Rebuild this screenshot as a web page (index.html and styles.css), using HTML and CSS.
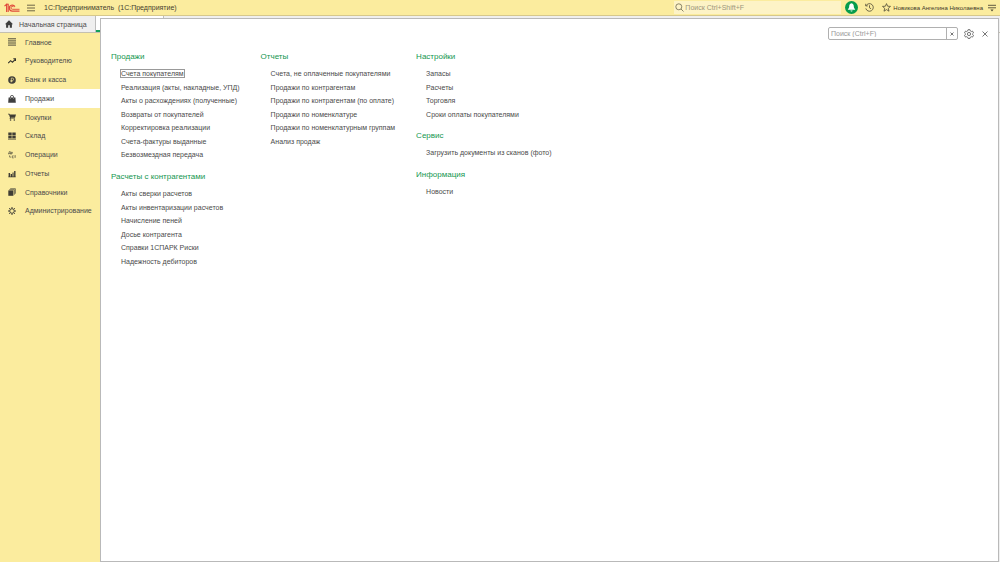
FILE: index.html
```html
<!DOCTYPE html>
<html lang="ru">
<head>
<meta charset="utf-8">
<title>1С:Предприниматель</title>
<link rel="stylesheet" href="styles.css">
</head>
<body>
<div class="app">
  <header class="topbar">
    <svg class="logo" viewBox="0 0 16 10" fill="none" stroke="#e0483a"><path d="M.5 3.2 2.6 1.3V9M4.2 9V.8M2.6 1.2h1.6" stroke-width="1.1"/><path d="M10.9 3.6A3 3 0 1 0 8.4 8.1H15.5" stroke-width="1.2"/><path d="M9.8 4.2A1.5 1.5 0 1 0 8.5 6.3H15.5" stroke-width=".9"/></svg>
    <button class="icon-btn menu-btn" aria-label="Меню"><svg width="8" height="8" viewBox="0 0 8 8" stroke="#5c563c" stroke-width=".9"><path d="M0 1.2h8M0 4h8M0 6.8h8"/></svg></button>
    <h1 class="title">1С:Предприниматель&nbsp; (1С:Предприятие)</h1>
    <label class="global-search">
      <svg width="9" height="9" viewBox="0 0 9 9" fill="none" stroke="#6f6a50" stroke-width=".8"><circle cx="3.8" cy="3.8" r="3"/><path d="m6 6 2.5 2.5"/></svg>
      <input type="text" placeholder="Поиск Ctrl+Shift+F" aria-label="Глобальный поиск">
    </label>
    <button class="icon-btn bell" aria-label="Уведомления"><svg width="13" height="13" viewBox="0 0 13 13"><circle cx="6.5" cy="6.5" r="6.5" fill="#069c4c"/><path d="M6.5 2.3c-1.9.3-2.2 1.7-2.3 3.2-.1 1.4-.6 2-1.3 2.8v.5h7.2v-.5c-.7-.8-1.2-1.4-1.3-2.8-.1-1.5-.4-2.9-2.3-3.2ZM5.4 9.4a1.1 1.1 0 0 0 2.2 0Z" fill="#fff"/></svg></button>
    <button class="icon-btn history" aria-label="История"><svg width="9" height="9" viewBox="0 0 9 9" fill="none" stroke="#4f4a36" stroke-width=".8"><path d="M1.1 2.7A3.8 3.8 0 1 1 .8 5.4M.7.8v2.1h2.1M4.5 2.3v2.5l1.6 1"/></svg></button>
    <button class="icon-btn star" aria-label="Избранное"><svg width="9" height="9" viewBox="0 0 9 9" fill="none" stroke="#4f4a36" stroke-width=".8" stroke-linejoin="round"><path d="m4.5.6 1.1 2.6 2.9.2-2.2 1.9.7 2.9-2.5-1.6L2 8.2l.7-2.9L.5 3.4l2.9-.2Z"/></svg></button>
    <button class="user">Новикова Ангелина Николаевна</button>
    <button class="icon-btn options" aria-label="Сервис и настройки"><svg width="8" height="8" viewBox="0 0 8 8"><path d="M0 1.3h8M0 3.8h8" stroke="#4f4a36" stroke-width=".9"/><path d="M2.4 5.6h3.2L4 7.6Z" fill="#4f4a36"/></svg></button>
  </header>

  <div class="tabs">
    <a class="tab" href="#home"><svg width="8" height="8" viewBox="0 0 8 8" fill="#3d3d3d"><path d="M4 .3 0 4.2h1.1v3.5h2.1V5.2h1.6v2.5h2.1V4.2H8Z"/></svg>Начальная страница</a>
    <a class="tab tab-active" href="#current" aria-label="Текущая вкладка"></a>
  </div>

  <div class="workspace">
    <nav class="sidebar">
      <ul>
        <li><a href="#main"><svg viewBox="0 0 8 8" stroke="#4d4a3b" stroke-width="1"><path d="M0 .8h8M0 2.9h8M0 5h8M0 7.1h8"/></svg>Главное</a></li>
        <li><a href="#manager"><svg viewBox="0 0 8 8" fill="none" stroke="#33322c" stroke-width="1.1"><path d="M.2 6.2 2.7 3.7l1.7 1.6L7.2 2.5"/><path d="M5.3 1.8h2.2V4" /></svg>Руководителю</a></li>
        <li><a href="#bank"><svg viewBox="0 0 8 8"><circle cx="4" cy="4" r="3.8" fill="#43413a"/><path d="M3.3 6.3V2.1h1.1a1.1 1.1 0 0 1 0 2.4H2.5M2.5 5.4h2" fill="none" stroke="#f9ea9e" stroke-width=".7"/></svg>Банк и касса</a></li>
        <li class="current"><a href="#sales" aria-current="page"><svg viewBox="0 0 8 8"><path d="M.6 2.6h6.8l.4 5.2H.2Z" fill="#3f3f3f"/><path d="M2.4 3.8V2a1.6 1.6 0 0 1 3.2 0v1.8" fill="none" stroke="#3f3f3f" stroke-width=".8"/><path d="M2.4 2.8v1.1M5.6 2.8v1.1" stroke="#ddd" stroke-width=".5"/></svg>Продажи</a></li>
        <li><a href="#purchases"><svg viewBox="0 0 8 8" fill="#3f3d34"><path d="M0 .8h1.5l.4.8H8L7 4.7H2.8L2.6 5.4H7v.7H1.9l-.3-.5.4-.9L1 1.5H0Z"/><circle cx="2.6" cy="7" r=".8"/><circle cx="6.3" cy="7" r=".8"/></svg>Покупки</a></li>
        <li><a href="#warehouse"><svg viewBox="0 0 8 8" fill="#3f3d34"><path d="M.3.6h3.4v2.8H.3ZM4.3.6h3.4v2.8H4.3ZM.3 3.9h3.4v2.4H.3ZM4.3 3.9h3.4v2.4H4.3ZM0 6.7h8v.8H0Z"/></svg>Склад</a></li>
        <li><a href="#operations"><svg viewBox="0 0 8 8" fill="none" stroke="#5a5744" stroke-width=".7"><path d="M.2 3.3V2.6h2.6v.7M.8 2.5 1.3.6h1v2M3.2 3.5V1.3h1.2v1H3.2M5.7 4.9H4.3v2h1.4M6.5 4.8h1.3M7.1 4.8V7M1.6 4.4v1.7h1.5"/></svg>Операции</a></li>
        <li><a href="#reports"><svg viewBox="0 0 8 8" fill="#3f3d34"><path d="M.6 3h1.5v3.6H.6ZM2.7 4h1.4v2.6H2.7ZM4.5 2.5h1.1v4.1H4.5ZM6.1 1.1h1.4v5.5H6.1ZM.3 6.5h7.4v.8H.3Z"/></svg>Отчеты</a></li>
        <li><a href="#catalogs"><svg viewBox="0 0 8 8"><path d="M.3 2.4h5.1v5.4H.3Z" fill="#3f3d34"/><path d="M1.2 1.7h5.2v5M2.2.7h5.2v5" fill="none" stroke="#4b493e" stroke-width=".7"/></svg>Справочники</a></li>
        <li><a href="#admin"><svg viewBox="0 0 8 8" fill="none" stroke="#3f3d34"><circle cx="4" cy="4" r="2.3" stroke-width="1"/><path d="M4 0v1.4M4 6.6V8M0 4h1.4M6.6 4H8M1.2 1.2l.9.9M5.9 5.9l.9.9M6.8 1.2l-.9.9M2.1 5.9l-.9.9" stroke-width="1"/></svg>Администрирование</a></li>
      </ul>
    </nav>
  </div>

  <main class="panel">
    <div class="panel-tools">
      <div class="panel-search">
        <input type="text" placeholder="Поиск (Ctrl+F)" aria-label="Поиск">
        <button aria-label="Очистить"><svg width="4" height="4" viewBox="0 0 4 4" stroke="#555" stroke-width=".8"><path d="m.5.5 3 3M3.5.5l-3 3"/></svg></button>
      </div>
      <button class="icon-btn" aria-label="Настройка"><svg width="10" height="10" viewBox="0 0 10 10" fill="none" stroke="#555" stroke-width=".8" stroke-linejoin="round"><path d="M4 .7h2l.3 1.2 1 .6 1.2-.4 1 1.8-.9.8v.8l.9.8-1 1.8-1.2-.4-1 .6L6 9.4H4l-.3-1.1-1-.6-1.2.4-1-1.8.9-.8v-.8l-.9-.8 1-1.8 1.2.4 1-.6Z"/><circle cx="5" cy="5" r="1.6"/></svg></button>
      <button class="icon-btn" aria-label="Закрыть"><svg width="6" height="6" viewBox="0 0 6 6" stroke="#555" stroke-width=".8"><path d="m.5.5 5 5M5.5.5l-5 5"/></svg></button>
    </div>
    <div class="columns">
      <div class="column">
        <section>
          <h2>Продажи</h2>
          <ul>
            <li><a class="focused" href="#l1">Счета покупателям</a></li>
            <li><a href="#l2">Реализация (акты, накладные, УПД)</a></li>
            <li><a href="#l3">Акты о расхождениях (полученные)</a></li>
            <li><a href="#l4">Возвраты от покупателей</a></li>
            <li><a href="#l5">Корректировка реализации</a></li>
            <li><a href="#l6">Счета-фактуры выданные</a></li>
            <li><a href="#l7">Безвозмездная передача</a></li>
          </ul>
        </section>
        <section>
          <h2>Расчеты с контрагентами</h2>
          <ul>
            <li><a href="#l8">Акты сверки расчетов</a></li>
            <li><a href="#l9">Акты инвентаризации расчетов</a></li>
            <li><a href="#l10">Начисление пеней</a></li>
            <li><a href="#l11">Досье контрагента</a></li>
            <li><a href="#l12">Справки 1СПАРК Риски</a></li>
            <li><a href="#l13">Надежность дебиторов</a></li>
          </ul>
        </section>
      </div>
      <div class="column">
        <section>
          <h2>Отчеты</h2>
          <ul>
            <li><a href="#r1">Счета, не оплаченные покупателями</a></li>
            <li><a href="#r2">Продажи по контрагентам</a></li>
            <li><a href="#r3">Продажи по контрагентам (по оплате)</a></li>
            <li><a href="#r4">Продажи по номенклатуре</a></li>
            <li><a href="#r5">Продажи по номенклатурным группам</a></li>
            <li><a href="#r6">Анализ продаж</a></li>
          </ul>
        </section>
      </div>
      <div class="column">
        <section>
          <h2>Настройки</h2>
          <ul>
            <li><a href="#s1">Запасы</a></li>
            <li><a href="#s2">Расчеты</a></li>
            <li><a href="#s3">Торговля</a></li>
            <li><a href="#s4">Сроки оплаты покупателями</a></li>
          </ul>
        </section>
        <section>
          <h2>Сервис</h2>
          <ul>
            <li><a href="#s5">Загрузить документы из сканов (фото)</a></li>
          </ul>
        </section>
        <section>
          <h2>Информация</h2>
          <ul>
            <li><a href="#s6">Новости</a></li>
          </ul>
        </section>
      </div>
    </div>
  </main>
</div>
</body>
</html>
```
FILE: styles.css
```css
* { box-sizing: border-box; }

body {
  margin: 0;
  font-family: "Liberation Sans", Arial, sans-serif;
  font-size: 7px;
  color: #4a4a4a;
}

ul, h1, h2 { margin: 0; padding: 0; font-weight: normal; }
ul { list-style: none; }
a { color: inherit; text-decoration: none; }
button, input { font: inherit; color: inherit; padding: 0; border: 0; background: none; }
input { min-width: 0; outline: 0; }
svg { display: block; flex: none; }

.app {
  position: relative;
  display: flex;
  flex-direction: column;
  min-height: 100vh;
}

.icon-btn { display: flex; align-items: center; justify-content: center; }

/* Top bar */
.topbar {
  display: flex;
  align-items: center;
  height: 16px;
  padding: 0 4px;
  background: #fbec9e;
  border-bottom: 1px solid #d6c88c;
}
.logo { width: 16px; height: 10px; }
.menu-btn { margin-left: 7px; }
.title { margin-left: 9px; font-size: 7px; color: #45412f; }
.global-search {
  display: flex;
  align-items: center;
  gap: 1px;
  width: 167px;
  height: 13px;
  margin-left: auto;
  padding-left: 1px;
  background: #fdf3c6;
}
.global-search input { flex: 1; }
.global-search input::placeholder { color: #9c967c; opacity: 1; }
.bell { margin-left: 4px; }
.history { margin-left: 7px; }
.star { margin-left: 8px; }
.user { margin-left: 2px; font-size: 6px; color: #3e3a2a; }
.options { margin-left: 5px; }

/* Open windows */
.tabs {
  display: flex;
  height: 17px;
  background: #efefef;
  border-bottom: 1px solid #c4c0b0;
}
.tab {
  display: flex;
  align-items: center;
  gap: 6px;
  padding: 0 8px 0 5px;
  border-right: 1px solid #bdbdbd;
}
.tab-active {
  width: 68px;
  background: #fff;
  border-bottom: 2px solid #12a05a;
}

/* Section navigation */
.workspace { display: flex; flex: 1; background: #efefef; }
.sidebar { width: 100px; background: #fbec9e; }
.sidebar li { height: 19px; }
.sidebar li:nth-child(4n + 1) { height: 18px; }
.sidebar a { display: flex; align-items: center; gap: 9px; height: 100%; padding-left: 8px; }
.sidebar svg { width: 8px; height: 8px; }
.sidebar .current { background: #fff; }

/* Section menu shown over the workspace */
.panel {
  position: absolute;
  inset: 18px 1px 0 100px;
  background: #fff;
  border: 1px solid #b9b9b9;
}
.panel-tools {
  display: flex;
  align-items: center;
  justify-content: flex-end;
  gap: 6px;
  padding: 8px 8px 0 0;
}
.panel-tools .icon-btn { width: 10px; }
.panel-search {
  display: flex;
  width: 130px;
  height: 13px;
  border: 1px solid #b0b0b0;
  border-radius: 2px;
}
.panel-search input { flex: 1; padding-left: 2px; }
.panel-search input::placeholder { color: #999; opacity: 1; }
.panel-search button {
  display: flex;
  align-items: center;
  justify-content: center;
  width: 11px;
  border-left: 1px solid #b0b0b0;
}

.columns { display: flex; gap: 21px; padding: 11px 10px; }
.column { display: flex; flex-direction: column; gap: 9px; }
.column h2 { font-size: 8px; line-height: 12px; color: #14964f; }
.column ul { padding: 4px 0 0 10px; }
.column li { height: 14px; line-height: 14px; white-space: nowrap; }
.column li:nth-child(even) { height: 13px; line-height: 13px; }
.focused { outline: 1px solid #999; }
```
